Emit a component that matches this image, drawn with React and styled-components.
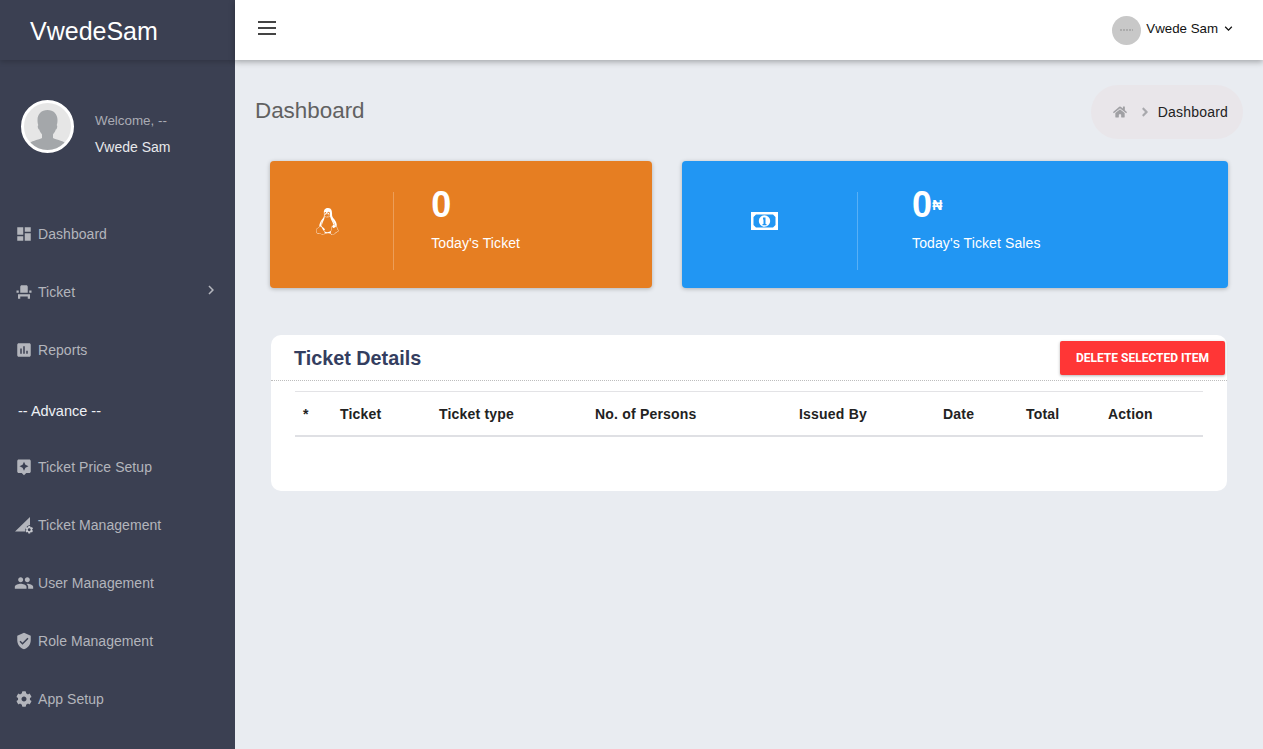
import React from "react";
import styled, { createGlobalStyle } from "styled-components";
import {
  MdDashboard,
  MdEventSeat,
  MdAssessment,
  MdAssistant,
  MdPeople,
  MdVerifiedUser,
  MdSettings,
  MdKeyboardArrowDown,
  MdKeyboardArrowRight,
} from "react-icons/md";
import { FaCog, FaHome, FaLinux, FaAngleRight } from "react-icons/fa";

const GlobalStyle = createGlobalStyle`
  html, body {
    margin: 0;
    padding: 0;
    height: 100%;
    background: #e9ecf1;
    font-family: "Liberation Sans", Arial, sans-serif;
  }
  * { box-sizing: border-box; }
`;

const Layout = styled.div`
  display: flex;
  height: 749px;
  overflow: hidden;
`;

const Sidebar = styled.aside`
  width: 235px;
  flex: none;
  background: #3b4052;
  display: flex;
  flex-direction: column;
`;

const Brand = styled.div`
  height: 60px;
  padding-left: 30px;
  font-size: 25px;
  line-height: 62px;
  color: #fff;
  box-shadow: 0 2px 5px rgba(0, 0, 0, 0.18);
`;

const Profile = styled.div`
  display: flex;
  align-items: flex-start;
  gap: 21px;
  padding: 40px 0 0 21px;
`;

const Avatar = styled.div`
  width: 53px;
  height: 53px;
  border-radius: 50%;
  border: 3px solid #fff;
  background: #e6e6e6;
  overflow: hidden;
  flex: none;
  svg { display: block; width: 100%; height: 100%; }
`;

const ProfileText = styled.div`
  display: flex;
  flex-direction: column;
  gap: 10px;
  padding-top: 13px;
  font-size: 14px;
  line-height: 16px;
`;

const Welcome = styled.span`
  color: #aaacb4;
  font-size: 13.4px;
`;

const ProfileName = styled.span`
  color: #e8e9ec;
`;

const Menu = styled.nav`
  display: flex;
  flex-direction: column;
  padding-top: 50px;
`;

const MenuItem = styled.div`
  height: 58px;
  display: flex;
  align-items: center;
  padding: 0 15px 0 12px;
  font-size: 14px;
  letter-spacing: 0.05px;
  color: #b3b5bc;
`;

const MenuIcon = styled.span`
  width: 24px;
  height: 18px;
  margin-right: 2px;
  display: flex;
  align-items: center;
  justify-content: center;
  color: #b3b5bc;
  font-size: 18px;
  flex: none;
`;

const MenuLabel = styled.span`
  flex: 1;
`;

const MenuCaret = styled.span`
  display: flex;
  margin-top: -4px;
  color: #b3b5bc;
  font-size: 18px;
`;

const MenuHeading = styled.div`
  height: 59px;
  padding: 5px 0 0 18px;
  display: flex;
  align-items: center;
  font-size: 14.5px;
  color: #eef0f5;
`;

const Main = styled.main`
  flex: 1;
  min-width: 0;
  display: flex;
  flex-direction: column;
`;

const Topbar = styled.header`
  height: 60px;
  flex: none;
  background: #fff;
  display: flex;
  align-items: center;
  justify-content: space-between;
  padding: 0 27px 0 23px;
  box-shadow: 0 2px 6px rgba(0, 0, 0, 0.3);
`;

const Burger = styled.div`
  display: flex;
  flex-direction: column;
  gap: 4px;
  width: 18px;
  margin-bottom: 4px;
  span { display: block; height: 2px; background: #444; }
`;

const UserMenu = styled.div`
  display: flex;
  align-items: center;
  font-size: 13.3px;
  color: #111;
`;

const UserPic = styled.div`
  width: 29px;
  height: 29px;
  border-radius: 50%;
  background: #c8c8c8;
  display: flex;
  align-items: center;
  justify-content: center;
  margin-right: 5px;
`;

const UserName = styled.span`
  margin-bottom: 4px;
`;

const UserCaret = styled.span`
  display: flex;
  margin: 0 0 4px 3px;
  font-size: 15px;
`;

const Content = styled.div`
  padding: 25px 20px 0;
`;

const PageHead = styled.div`
  display: flex;
  align-items: center;
  justify-content: space-between;
  height: 54px;
`;

const PageTitle = styled.h1`
  margin: 0 0 3px;
  font-size: 22.4px;
  font-weight: 400;
  color: #616161;
`;

const Crumbs = styled.div`
  height: 54px;
  padding: 0 15px 0 22px;
  border-radius: 27px;
  background: #e9e6ea;
  display: flex;
  align-items: center;
  font-size: 14px;
  letter-spacing: 0.2px;
  color: #222;
`;

const CrumbHome = styled.span`
  display: flex;
  color: #a0a0a4;
  font-size: 14px;
`;

const CrumbSep = styled.span`
  display: flex;
  color: #a9a9ad;
  font-size: 14px;
  margin: 0 6px 0 11px;
`;

const Stats = styled.div`
  display: grid;
  grid-template-columns: 382px 546px;
  gap: 30px;
  margin: 22px 15px 0;
`;

const StatCard = styled.div`
  height: 127px;
  border-radius: 4px;
  background: ${(p) => p.$bg};
  color: #fff;
  display: flex;
  align-items: center;
  box-shadow: 0 1px 4px rgba(0, 0, 0, 0.25);
`;

const StatIcon = styled.div`
  width: calc(32% + 1.3px);
  height: 78px;
  margin-top: 13px;
  display: flex;
  align-items: center;
  justify-content: center;
  padding: 0 2% 20px 0;
  border-right: 1px solid rgba(255, 255, 255, 0.25);
  font-size: 27px;
`;

const StatBody = styled.div`
  margin-left: calc(10% - 0.5px);
  margin-top: -13px;
`;

const StatValue = styled.div`
  display: flex;
  align-items: center;
  height: 40px;
  font-size: 36px;
  font-weight: 700;
`;

const Naira = styled.span`
  font-size: 14px;
`;

const StatLabel = styled.div`
  margin-top: 10px;
  font-size: 14px;
  letter-spacing: 0.1px;
`;

const Panel = styled.section`
  margin: 47px 16px 0;
  width: 956px;
  height: 156px;
  background: #fff;
  border-radius: 10px;
`;

const PanelHead = styled.div`
  height: 46px;
  display: flex;
  align-items: center;
  justify-content: space-between;
  padding: 0 2px 0 23px;
  border-bottom: 1px dotted #bdbdbd;
`;

const PanelTitle = styled.h2`
  margin: 2px 0 0;
  font-size: 19.8px;
  font-weight: 700;
  color: #343e60;
`;

const DeleteButton = styled.button`
  width: 165px;
  height: 34px;
  margin-top: 1px;
  border: 0;
  border-radius: 2px;
  background: #ff3636;
  color: #fff;
  font-family: Roboto, "Liberation Sans", sans-serif;
  font-size: 12px;
  font-weight: 700;
  text-transform: uppercase;
  box-shadow: 0 1px 3px rgba(0, 0, 0, 0.3);
`;

const Table = styled.table`
  width: 908px;
  margin: 10px 0 0 24px;
  border-collapse: collapse;
  table-layout: fixed;
`;

const HeadCell = styled.th`
  width: ${(p) => p.$w}px;
  height: 44px;
  padding: 2px 8px 0;
  border-top: 1px solid #e3e3e6;
  border-bottom: 2px solid #dfe0e4;
  text-align: left;
  font-size: 14px;
  font-weight: 700;
  letter-spacing: 0.2px;
  color: #222;
`;

const columns = [
  ["*", 37],
  ["Ticket", 99],
  ["Ticket type", 156],
  ["No. of Persons", 204],
  ["Issued By", 144],
  ["Date", 83],
  ["Total", 82],
  ["Action", 103],
];

function Silhouette() {
  return (
    <svg viewBox="0 0 47 47">
      <path
        fill="#a4a7aa"
        d="M23.5 7c6 0 10 4 10 10 0 2.600-.4 4-.8 5.300.5.300.8 1.300.3 2.700-.3 1-.7 1.500-1.200 1.600-.6 2-1.700 3.700-2.800 4.800v3.600c1.800 1.500 9.500 2.400 12 5V47H6v-7c2.500-2.600 10.200-3.500 12-5v-3.600c-1.100-1.100-2.200-2.800-2.800-4.800-.5-.1-.9-.6-1.200-1.600-.5-1.400-.2-2.400.3-2.700-.4-1.300-.8-2.700-.8-5.300 0-6 4-10 10-10z"
      />
    </svg>
  );
}

function SmallPic() {
  return (
    <svg width="13" height="2" viewBox="0 0 13 2">
      <path stroke="#8f8f8f" strokeWidth="1" strokeDasharray="2 1" d="M0 1h13" />
    </svg>
  );
}

function TicketManageIcon() {
  return (
    <svg width="20" height="20" viewBox="0 0 20 20">
      <path fill="#b3b5bc" d="M1 16.500 16 2v8a5.500 5.500 0 0 0-4.800 6.500z" />
      <MdSettings x="10.500" y="10" size="9.500" color="#c4c6cc" />
    </svg>
  );
}

function MoneyIcon() {
  return (
    <svg width="27" height="18" viewBox="0 0 27 18">
      <path
        fill="#fff"
        fillRule="evenodd"
        d="M0 0h27v18H0zM5 2.500 2.500 5v8L5 15.500h17l2.500-2.500V5L22 2.500z"
      />
      <circle cx="13.500" cy="9" r="5.700" fill="#fff" />
      <path fill="#2196f3" d="M12 5.500h2.500V12h1v1.300h-4V12h1V7.500H12z" />
    </svg>
  );
}

const menuTop = [
  ["Dashboard", <MdDashboard />],
  ["Ticket", <MdEventSeat />, true],
  ["Reports", <MdAssessment />],
];

const menuAdvance = [
  ["Ticket Price Setup", <MdAssistant />],
  ["Ticket Management", <TicketManageIcon />],
  ["User Management", <MdPeople size={20} />],
  ["Role Management", <MdVerifiedUser />],
  ["App Setup", <FaCog size={16} />],
];

function NavRow({ label, icon, caret }) {
  return (
    <MenuItem>
      <MenuIcon>{icon}</MenuIcon>
      <MenuLabel>{label}</MenuLabel>
      {caret && (
        <MenuCaret>
          <MdKeyboardArrowRight />
        </MenuCaret>
      )}
    </MenuItem>
  );
}

export default function App() {
  return (
    <Layout>
      <GlobalStyle />
      <Sidebar>
        <Brand>VwedeSam</Brand>
        <Profile>
          <Avatar>
            <Silhouette />
          </Avatar>
          <ProfileText>
            <Welcome>Welcome, --</Welcome>
            <ProfileName>Vwede Sam</ProfileName>
          </ProfileText>
        </Profile>
        <Menu>
          {menuTop.map(([label, icon, caret]) => (
            <NavRow key={label} label={label} icon={icon} caret={caret} />
          ))}
          <MenuHeading>-- Advance --</MenuHeading>
          {menuAdvance.map(([label, icon]) => (
            <NavRow key={label} label={label} icon={icon} />
          ))}
        </Menu>
      </Sidebar>
      <Main>
        <Topbar>
          <Burger>
            <span />
            <span />
            <span />
          </Burger>
          <UserMenu>
            <UserPic>
              <SmallPic />
            </UserPic>
            <UserName>Vwede Sam</UserName>
            <UserCaret>
              <MdKeyboardArrowDown />
            </UserCaret>
          </UserMenu>
        </Topbar>
        <Content>
          <PageHead>
            <PageTitle>Dashboard</PageTitle>
            <Crumbs>
              <CrumbHome>
                <FaHome />
              </CrumbHome>
              <CrumbSep>
                <FaAngleRight />
              </CrumbSep>
              Dashboard
            </Crumbs>
          </PageHead>
          <Stats>
            <StatCard $bg="#e67e22">
              <StatIcon>
                <FaLinux />
              </StatIcon>
              <StatBody>
                <StatValue>0</StatValue>
                <StatLabel>Today's Ticket</StatLabel>
              </StatBody>
            </StatCard>
            <StatCard $bg="#2196f3">
              <StatIcon>
                <MoneyIcon />
              </StatIcon>
              <StatBody>
                <StatValue>
                  0<Naira>₦</Naira>
                </StatValue>
                <StatLabel>Today's Ticket Sales</StatLabel>
              </StatBody>
            </StatCard>
          </Stats>
          <Panel>
            <PanelHead>
              <PanelTitle>Ticket Details</PanelTitle>
              <DeleteButton>Delete Selected Item</DeleteButton>
            </PanelHead>
            <Table>
              <thead>
                <tr>
                  {columns.map(([name, w]) => (
                    <HeadCell key={name} $w={w}>
                      {name}
                    </HeadCell>
                  ))}
                </tr>
              </thead>
            </Table>
          </Panel>
        </Content>
      </Main>
    </Layout>
  );
}
